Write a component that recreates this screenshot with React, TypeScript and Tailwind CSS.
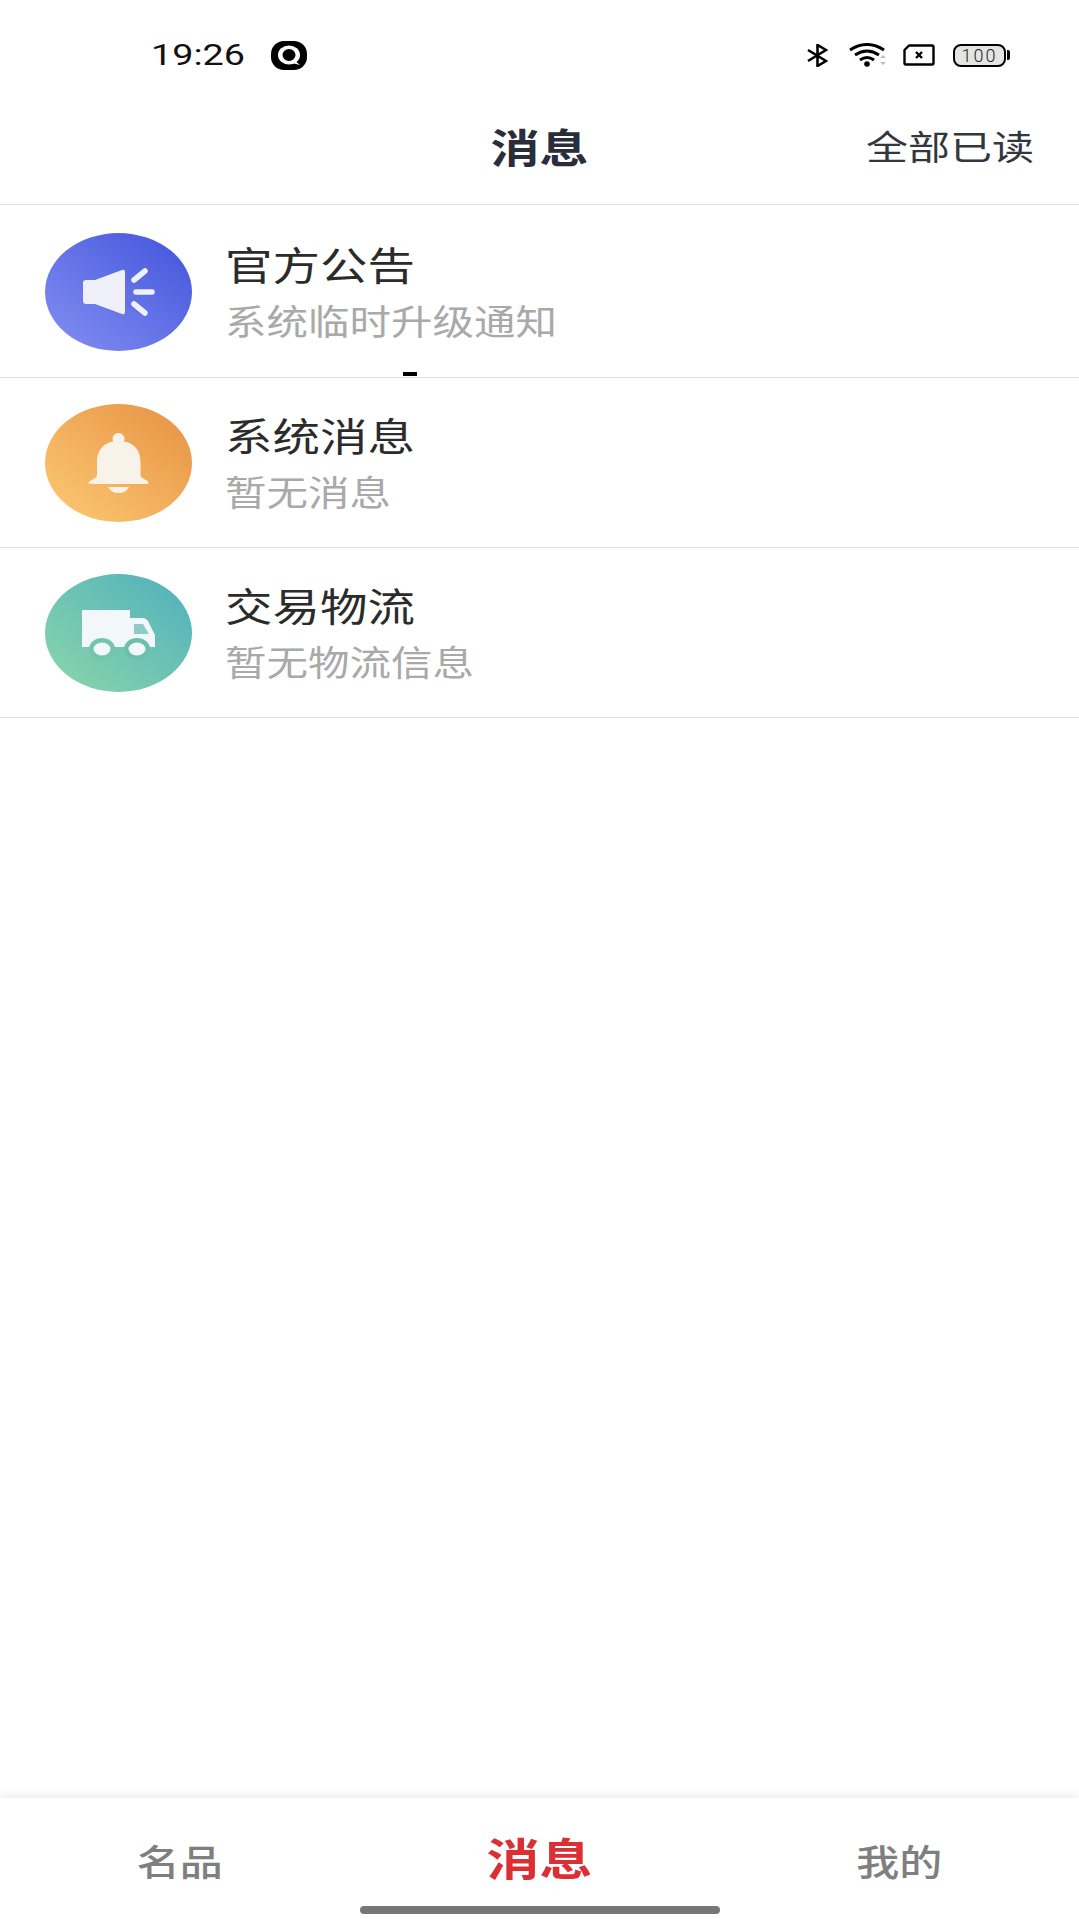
const cjk = "font-['Noto_Sans_CJK_SC','Noto_Sans',sans-serif]"

function SpeakerIcon() {
  return (
    <svg width="147" height="118" viewBox="0 0 147 118">
      <path d="M38 50q0-3 3-3h9L77 37q3-1 3 2v40q0 3-3 2L50 71h-9q-3 0-3-3z" fill="#f0f0fb" />
      <path d="M89 47l11-9M91 59h16M89 71l11 9" stroke="#f0f0fb" strokeWidth="5.500" strokeLinecap="round" fill="none" />
    </svg>
  )
}

function BellIcon() {
  return (
    <svg width="147" height="118" viewBox="0 0 147 118">
      <circle cx="73.500" cy="35" r="6" fill="#f8f3e8" />
      <path d="M73.500 37c15 0 22 9 22 21v13q0 2 2 3l5 3q2 2 0 3H45q-3-1 0-3l5-3q2-1 2-3V58c0-12 7-21 21.500-21z" fill="#f8f3e8" />
      <path d="M63 83h21q-3 6-10.500 6T63 83z" fill="#f8f3e8" />
    </svg>
  )
}

function TruckIcon() {
  return (
    <svg width="147" height="118" viewBox="0 0 147 118">
      <path d="M38 36h46q1 0 1 1v7h13q3 0 5 3l7 14v12H37V37q0-1 1-1z" fill="#f2f8f9" />
      <path d="M89 50h9l6 10H89z" fill="#8fcbc8" />
      <ellipse cx="57" cy="75" rx="13" ry="11" fill="#75c4ae" />
      <ellipse cx="57" cy="75" rx="8.500" ry="6.500" fill="#f2f8f9" />
      <ellipse cx="92" cy="75" rx="13" ry="11" fill="#6dbeb0" />
      <ellipse cx="92" cy="75" rx="8.500" ry="6.500" fill="#f2f8f9" />
    </svg>
  )
}

function StatusIcons() {
  return (
    <div className="flex items-center text-black">
      <svg width="21" height="23" viewBox="0 0 21 23" className="mr-[21px]">
        <path d="M1 6l18 11-8.500 5V1L19 6 1 17" stroke="#000" strokeWidth="2.600" fill="none" />
      </svg>
      <svg width="38" height="24" viewBox="0 0 38 24" className="mr-[16px]">
        <path d="M1 7q17-11 34 0M6 12q12-8 24 0M11 17q7-5 14 0" stroke="#000" strokeWidth="3" fill="none" />
        <circle cx="18" cy="21" r="2.800" fill="#000" />
        <path d="M31 15l3-3 3 3zM31 19l3 3 3-3z" fill="#bdbdbd" />
      </svg>
      <div className="mr-[18px] h-[22px] w-[32px]">
        <svg width="32" height="22" viewBox="0 0 32 22">
          <path d="M6 1.500h23q1.500 0 1.500 1.500v16q0 1.500-1.500 1.500H3q-1.500 0-1.500-1.500V6z" stroke="#000" strokeWidth="2.400" fill="none" strokeLinejoin="round" />
          <path d="M13 8l6 6M19 8l-6 6" stroke="#000" strokeWidth="2.400" />
        </svg>
      </div>
      <div className="flex items-center">
        <div className="flex h-[23px] w-[53px] items-center justify-center rounded-[8px] border-2 border-black bg-[#e4e4e4] font-['Roboto',sans-serif] text-[18px] font-light tracking-[2px] text-[#222]">
          100
        </div>
        <div className="ml-[1px] h-[10px] w-[3px] rounded-r-[2px] bg-black" />
      </div>
    </div>
  )
}

const rows = [
  {
    title: '官方公告',
    sub: '系统临时升级通知',
    height: 'h-[173px] pt-[2px]',
    bg: 'from-[#858ff2] to-[#4352db]',
    icon: <SpeakerIcon />,
    mark: true,
  },
  {
    title: '系统消息',
    sub: '暂无消息',
    height: 'h-[170px]',
    bg: 'from-[#fdca74] to-[#e59142]',
    icon: <BellIcon />,
    mark: false,
  },
  {
    title: '交易物流',
    sub: '暂无物流信息',
    height: 'h-[170px]',
    bg: 'from-[#8bd7a9] to-[#4eafbc]',
    icon: <TruckIcon />,
    mark: false,
  },
]

export default function App() {
  return (
    <div className={`flex h-[1919px] w-[1079px] flex-col overflow-hidden bg-white ${cjk}`}>
      {/* status bar */}
      <div className="flex h-[110px] items-center justify-between pl-[151px] pr-[69px]">
        <div className="flex items-center">
          <span className="inline-block w-[120px] origin-left scale-x-[1.3] font-['Roboto',sans-serif] text-[29px] leading-none text-[#111]">
            19:26
          </span>
          <div className="flex h-[29px] w-[36px] items-center justify-center rounded-[13px] bg-black">
            <svg width="26" height="23" viewBox="0 0 26 23">
              <ellipse cx="13" cy="11" rx="11" ry="9.500" fill="#fff" />
              <ellipse cx="13" cy="11" rx="6.500" ry="6" fill="#000" />
              <path d="M18 16l6 5-8-2z" fill="#fff" />
            </svg>
          </div>
        </div>
        <StatusIcons />
      </div>

      {/* header */}
      <div className="grid h-[95px] grid-cols-3 items-start border-b border-[#dedede]">
        <div />
        <div className="-mt-[2px] flex h-[74px] items-center justify-center">
          <span className="scale-y-[0.82] text-[49px] font-bold leading-none text-[#2a2d3a]">消息</span>
        </div>
        <div className="-mt-[2px] flex h-[74px] items-center justify-end pr-[45px]">
          <span className="origin-right scale-y-[0.82] text-[42px] leading-none text-[#33363f]">全部已读</span>
        </div>
      </div>

      {/* list */}
      {rows.map((row) => (
        <div key={row.title} className={`relative flex items-center border-b border-[#dedede] pl-[45px] ${row.height}`}>
          <div className={`flex h-[118px] w-[147px] items-center justify-center rounded-[50%] bg-linear-to-tr ${row.bg}`}>
            {row.icon}
          </div>
          <div className="ml-[33px] flex flex-col">
            <span className="h-[56px] scale-y-[0.82] text-[47.500px] leading-[56px] text-[#2b2b2b]">{row.title}</span>
            <span className="h-[56px] scale-y-[0.84] text-[41.500px] leading-[56px] text-[#a9a9a9]">{row.sub}</span>
          </div>
          {row.mark && <div className="absolute bottom-[1px] left-[403px] h-[4px] w-[14px] bg-black" />}
        </div>
      ))}

      <div className="flex-1" />

      {/* tab bar */}
      <div className="flex h-[121px] flex-col bg-white pb-[5px] shadow-[0_-3px_8px_rgba(0,0,0,0.07)]">
        <div className="grid flex-1 grid-cols-3 items-center pt-[16px] text-center">
          <span className="scale-y-[0.84] text-[43px] font-medium leading-none text-[#7f7f7f]">名品</span>
          <span className="-mt-[6px] scale-y-[0.84] text-[53px] font-bold leading-none text-[#dc2f33]">消息</span>
          <span className="scale-y-[0.84] text-[43px] font-medium leading-none text-[#7f7f7f]">我的</span>
        </div>
        <div className="mx-auto h-[8px] w-[360px] rounded-full bg-[#777]" />
      </div>
    </div>
  )
}
